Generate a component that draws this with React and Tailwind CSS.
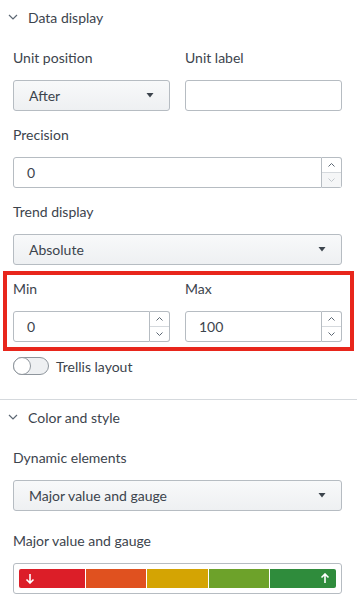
import React from 'react';

const Chevron = () => (
  <svg width="10" height="10" viewBox="0 0 10 10" className="text-[#5c6773]">
    <path d="M1 3l4 4 4-4" fill="none" stroke="currentColor" strokeWidth="1.2" />
  </svg>
);

const Caret = () => (
  <svg width="8" height="5" viewBox="0 0 8 5" className="text-[#3c444d]">
    <path d="M0.5 0h7L4 4.5z" fill="currentColor" />
  </svg>
);

const Label = ({ children }) => (
  <div className="h-[20px] leading-[20px] text-[14px] text-[#3c444d] mb-[12px]">{children}</div>
);

const Select = ({ value }) => (
  <div className="h-[31px] flex items-center justify-between pl-[15px] pr-[15px] rounded-[3px] border border-[#b6bcc2] bg-gradient-to-b from-[#f8f9fa] to-[#eef0f2] text-[14px] text-[#3c444d]">
    <span>{value}</span>
    <Caret />
  </div>
);

const NumberInput = ({ value, downDisabled }) => (
  <div className="h-[31px] flex">
    <div className="flex-1 flex items-center pl-[13px] rounded-l-[3px] border border-[#b6bcc2] bg-white text-[14px] text-[#3c444d]">
      {value}
    </div>
    <div className="w-[20px] flex flex-col rounded-r-[3px] border border-l-0 border-[#b6bcc2] bg-white">
      <div className="flex-1 flex items-center justify-center border-b border-[#d5d9dd]">
        <svg width="7" height="4" viewBox="0 0 7 4"><path d="M0.5 3.5l3-3 3 3" fill="none" stroke="#5c6773" strokeWidth="1" /></svg>
      </div>
      <div className={`flex-1 flex items-center justify-center ${downDisabled ? 'bg-[#f5f6f7]' : ''}`}>
        <svg width="7" height="4" viewBox="0 0 7 4"><path d="M0.5 0.5l3 3 3-3" fill="none" stroke={downDisabled ? '#c3c8cd' : '#5c6773'} strokeWidth="1" /></svg>
      </div>
    </div>
  </div>
);

const Header = ({ title }) => (
  <div className="h-[34px] flex items-center pl-[8px] gap-[10px] text-[14px] text-[#3c444d]">
    <Chevron />
    <span>{title}</span>
  </div>
);

const segments = ['bg-[#dc1e28]', 'bg-[#e0511f]', 'bg-[#d4a403]', 'bg-[#6da22a]', 'bg-[#2f8c3c]'];

export default function App() {
  return (
    <div className="w-[357px] h-[616px] bg-white overflow-hidden" style={{ fontFamily: 'Lato, "Open Sans", sans-serif' }}>
      {/* Data display */}
      <Header title="Data display" />
      <div className="pl-[13px] pr-[15px] pt-[14px]">
        <div className="grid grid-cols-2 gap-x-[15px]">
          <div>
            <Label>Unit position</Label>
            <Select value="After" />
          </div>
          <div>
            <Label>Unit label</Label>
            <div className="h-[31px] rounded-[3px] border border-[#b6bcc2] bg-white" />
          </div>
        </div>

        <div className="mt-[14px]">
          <Label>Precision</Label>
          <NumberInput value="0" downDisabled />
        </div>

        <div className="mt-[14px]">
          <Label>Trend display</Label>
          <Select value="Absolute" />
        </div>
      </div>

      {/* Min / Max highlighted */}
      <div className="mx-[3px] mt-[6px] border-4 border-[#e8261c] pl-[6px] pr-[8px] pt-[4px] pb-[5px]">
        <div className="grid grid-cols-2 gap-x-[15px]">
          <div>
            <Label>Min</Label>
            <NumberInput value="0" />
          </div>
          <div>
            <Label>Max</Label>
            <NumberInput value="100" />
          </div>
        </div>
      </div>

      <div className="pl-[13px] pr-[15px] mt-[6px] flex items-center gap-[7px] h-[18px]">
        <div className="w-[36px] h-[18px] rounded-full border border-[#8f969d] bg-[#eef0f2] relative">
          <div className="absolute left-[-1px] top-[-1px] w-[18px] h-[18px] rounded-full border border-[#8f969d] bg-white" />
        </div>
        <span className="text-[14px] text-[#3c444d]">Trellis layout</span>
      </div>

      <div className="mt-[24px] border-t border-[#d5d9dd]" />

      {/* Color and style */}
      <Header title="Color and style" />
      <div className="pl-[13px] pr-[15px] pt-[14px]">
        <Label>Dynamic elements</Label>
        <Select value="Major value and gauge" />

        <div className="mt-[20px]">
          <Label>Major value and gauge</Label>
          <div className="h-[31px] rounded-[3px] border border-[#b6bcc2] bg-white p-[5px] flex gap-[1px]">
            {segments.map((c, i) => (
              <div key={i} className={`flex-1 h-full flex items-center ${c} ${i === 0 ? 'rounded-l-[2px] pl-[6px]' : ''} ${i === 4 ? 'rounded-r-[2px] justify-end pr-[6px]' : ''}`}>
                {i === 0 && (
                  <svg width="10" height="11" viewBox="0 0 10 11"><path d="M5 1v9M1.5 6.5L5 10l3.5-3.5" fill="none" stroke="#fff" strokeWidth="1.6" /></svg>
                )}
                {i === 4 && (
                  <svg width="10" height="11" viewBox="0 0 10 11"><path d="M5 10V1M1.5 4.5L5 1l3.5 3.5" fill="none" stroke="#fff" strokeWidth="1.6" /></svg>
                )}
              </div>
            ))}
          </div>
        </div>
      </div>
    </div>
  );
}
